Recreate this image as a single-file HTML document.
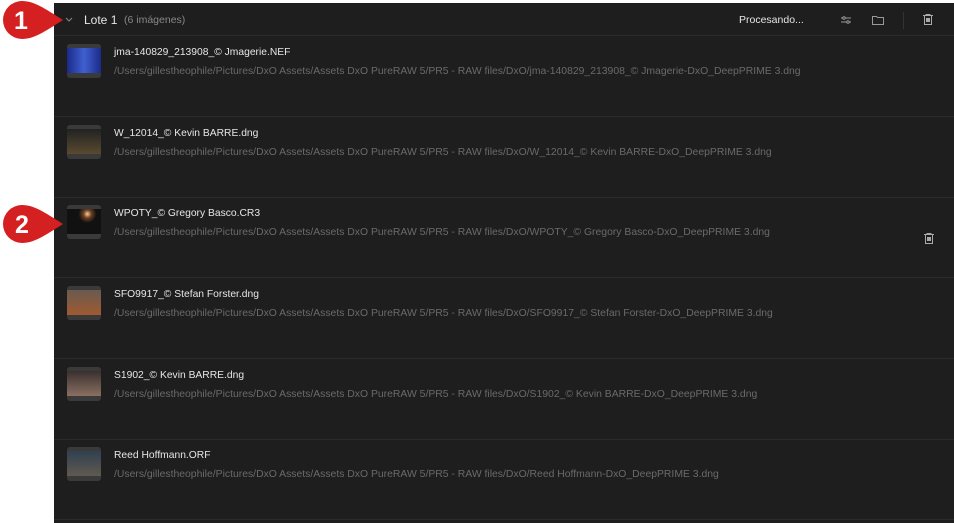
<!DOCTYPE html>
<html><head><style>
body{margin:0;width:954px;height:523px;background:#fff;position:relative;overflow:hidden;font-family:"Liberation Sans",sans-serif}
.panel{position:absolute;left:54px;top:3px;width:900px;height:520px;background:#1e1e1e}
.hdr{position:absolute;left:0;top:0;width:900px;height:32px;border-bottom:1px solid #2b2b2b}
.t{position:absolute;color:#e6e6e6;font-size:10.3px;white-space:nowrap}
.p{position:absolute;color:#6a6a6a;font-size:10.4px;white-space:nowrap}
.row{position:absolute;left:0;width:900px;height:80px;border-bottom:1px solid #2b2b2b}
.th{position:absolute;left:13px;top:8px;width:34px;height:34px;border-radius:3px;background:#3a3a3a;overflow:hidden}
.th i{position:absolute;left:0;top:4px;width:34px;height:25px;display:block}
</style></head><body>
<div class="panel">
 <div class="hdr">
  <svg style="position:absolute;left:11px;top:14px" width="8" height="6"><path d="M1 1l3 3 3-3" stroke="#888" fill="none"/></svg>
  <div class="t" style="left:30px;top:10px;font-size:12px">Lote 1</div>
  <div class="p" style="left:70px;top:11px;font-size:10.5px;color:#888">(6 imágenes)</div>
  <div class="t" style="left:685px;top:11px;font-size:10.5px">Procesando...</div>
  <svg style="position:absolute;left:787px;top:12px" width="10" height="10"><path d="M0 3h10M0 7h10" stroke="#999"/><circle cx="3" cy="3" r="1.3" fill="#1e1e1e" stroke="#999"/><circle cx="7" cy="7" r="1.3" fill="#1e1e1e" stroke="#999"/></svg>
  <svg style="position:absolute;left:818px;top:12px" width="12" height="10"><path d="M.5 1.5h4l1 1h6v7h-11z" stroke="#999" fill="none"/></svg>
  <div style="position:absolute;left:849px;top:9px;width:1px;height:17px;background:#333"></div>
  <svg style="position:absolute;left:869px;top:11px" width="10" height="11"><path d="M0 1.5h10M3 1.5V.5h4v1M1.5 2v8.5h7V2" stroke="#aaa" fill="none"/><rect x="3" y="4" width="4" height="4" fill="#aaa"/></svg>
 </div>
 <div class="row" style="top:33px"><div class="th"><i style="background:linear-gradient(90deg,#1a2a8a,#4060d0 50%,#1a2a8a)"></i></div><div class="t" style="left:60px;top:11px">jma-140829_213908_© Jmagerie.NEF</div><div class="p" style="left:60px;top:30px">/Users/gillestheophile/Pictures/DxO Assets/Assets DxO PureRAW 5/PR5 - RAW files/DxO/jma-140829_213908_© Jmagerie-DxO_DeepPRIME 3.dng</div></div>
 <div class="row" style="top:114px"><div class="th"><i style="background:linear-gradient(#222,#5a4a30)"></i></div><div class="t" style="left:60px;top:11px">W_12014_© Kevin BARRE.dng</div><div class="p" style="left:60px;top:30px">/Users/gillestheophile/Pictures/DxO Assets/Assets DxO PureRAW 5/PR5 - RAW files/DxO/W_12014_© Kevin BARRE-DxO_DeepPRIME 3.dng</div></div>
 <div class="row" style="top:194px"><div class="th"><i style="background:radial-gradient(circle at 60% 20%,#f0d0a0 0,#704020 4px,#111 9px)"></i></div><div class="t" style="left:60px;top:11px">WPOTY_© Gregory Basco.CR3</div><div class="p" style="left:60px;top:30px">/Users/gillestheophile/Pictures/DxO Assets/Assets DxO PureRAW 5/PR5 - RAW files/DxO/WPOTY_© Gregory Basco-DxO_DeepPRIME 3.dng</div>
  <svg style="position:absolute;left:870px;top:36px" width="10" height="11"><path d="M0 1.5h10M3 1.5V.5h4v1M1.5 2v8.5h7V2" stroke="#aaa" fill="none"/><rect x="3" y="4" width="4" height="4" fill="#aaa"/></svg></div>
 <div class="row" style="top:275px"><div class="th"><i style="background:linear-gradient(#6a5a50,#a05a30)"></i></div><div class="t" style="left:60px;top:11px">SFO9917_© Stefan Forster.dng</div><div class="p" style="left:60px;top:30px">/Users/gillestheophile/Pictures/DxO Assets/Assets DxO PureRAW 5/PR5 - RAW files/DxO/SFO9917_© Stefan Forster-DxO_DeepPRIME 3.dng</div></div>
 <div class="row" style="top:356px"><div class="th"><i style="background:linear-gradient(#3a3030,#8a7060)"></i></div><div class="t" style="left:60px;top:11px">S1902_© Kevin BARRE.dng</div><div class="p" style="left:60px;top:30px">/Users/gillestheophile/Pictures/DxO Assets/Assets DxO PureRAW 5/PR5 - RAW files/DxO/S1902_© Kevin BARRE-DxO_DeepPRIME 3.dng</div></div>
 <div class="row" style="top:436px"><div class="th"><i style="background:linear-gradient(#304050,#605a50)"></i></div><div class="t" style="left:60px;top:11px">Reed Hoffmann.ORF</div><div class="p" style="left:60px;top:30px">/Users/gillestheophile/Pictures/DxO Assets/Assets DxO PureRAW 5/PR5 - RAW files/DxO/Reed Hoffmann-DxO_DeepPRIME 3.dng</div></div>
</div>
<svg style="position:absolute;left:0;top:0" width="70" height="250">
 <path d="M22 1a19 19 0 1 0 0 38c12 0 22-7 41-19C44 8 34 1 22 1z" fill="#d42020"/>
 <path d="M22 205a19 19 0 1 0 0 38c12 0 22-7 41-19C44 212 34 205 22 205z" fill="#d42020"/>
 <text x="21" y="29" fill="#fff" font-family="Liberation Sans" font-weight="bold" font-size="25" text-anchor="middle">1</text>
 <text x="22" y="233" fill="#fff" font-family="Liberation Sans" font-weight="bold" font-size="25" text-anchor="middle">2</text>
</svg>
</body></html>
